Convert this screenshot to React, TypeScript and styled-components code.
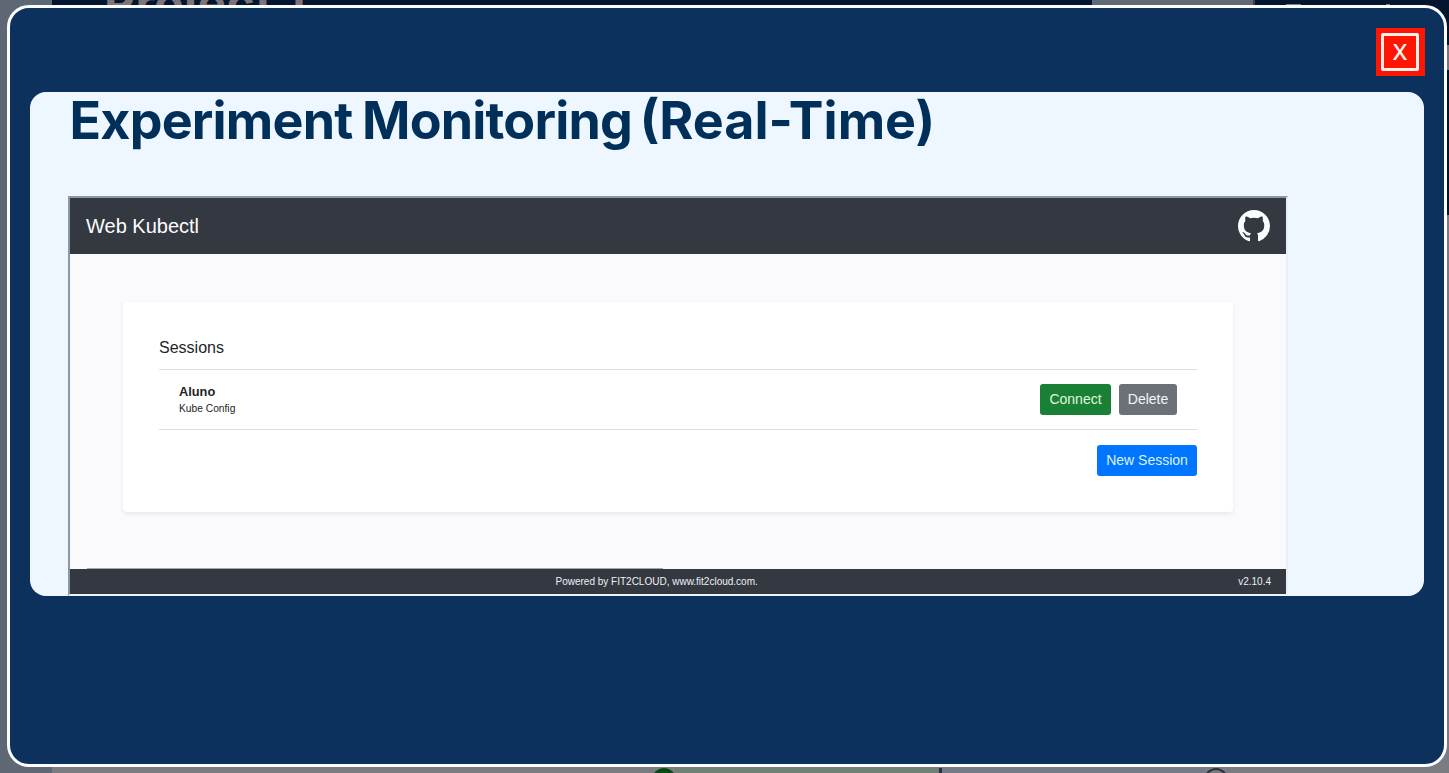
import React from "react";
import styled, { createGlobalStyle } from "styled-components";

const GlobalStyle = createGlobalStyle`
  * { box-sizing: border-box; }
  body { margin: 0; overflow: hidden; }
`;

const Page = styled.div`
  position: relative;
  width: 1449px;
  height: 773px;
  overflow: hidden;
  display: flex;
  background: #7b7c81;
  font-family: Inter, "Liberation Sans", sans-serif;
`;

const SideBar = styled.div`
  width: 52px;
  background: #5d6874;
`;

const Main = styled.div`
  flex: 1;
  display: flex;
  flex-direction: column;
  justify-content: space-between;
`;

const TopBar = styled.header`
  height: 215px;
  display: flex;
  background: #04152f;
`;

const ProjectName = styled.div`
  width: 1040px;
  padding-left: 52px;
  margin-top: -21px;
  font-size: 48px;
  line-height: 48px;
  font-weight: 700;
  letter-spacing: 0.4px;
  color: #7c7478;
`;

const TopField = styled.div`
  width: 163px;
  height: 40px;
  background: #606873;
  border-right: 2px solid #3d4148;
`;

const TopMark = styled.div<{ $gap: number; $width: number }>`
  width: ${(p) => p.$width}px;
  height: 2px;
  margin: 4px 0 0 ${(p) => p.$gap}px;
  background: #7d838b;
`;

const TopEdge = styled.div`
  width: 4px;
  height: 25px;
  margin: 45px 0 0 auto;
  background: #77777b;
`;

const Timeline = styled.div`
  height: 5px;
  display: flex;
  align-items: flex-start;
  overflow: hidden;
`;

const Dot = styled.span<{ $filled?: boolean }>`
  flex: none;
  width: 24px;
  height: 24px;
  border-radius: 50%;
  border: 2px solid ${(p) => (p.$filled ? "#064c12" : "#2a3043")};
  background: ${(p) => (p.$filled ? "#064c12" : "transparent")};
`;

const Track = styled.span<{ $width: number; $color: string }>`
  width: ${(p) => p.$width}px;
  height: 8px;
  background: ${(p) => p.$color};
`;

const Modal = styled.section`
  position: absolute;
  top: 5px;
  left: 7px;
  width: 1440px;
  height: 762px;
  padding: 20px;
  border: 3px solid #fafcff;
  border-radius: 22px;
  background: #0c315c;
  display: flex;
  flex-direction: column;
`;

const CloseButton = styled.button`
  align-self: flex-end;
  width: 49px;
  height: 48px;
  margin: 0 -1px 16px 0;
  padding: 5px 6px 5px 5px;
  border: 0;
  background: #ff1602;
  display: flex;
`;

const CloseFrame = styled.span`
  flex: 1;
  display: flex;
  align-items: center;
  justify-content: center;
  border: 3px solid #fff0ec;
  border-radius: 2px;
  font: 500 22px/30px Inter, sans-serif;
  color: #fff5f0;
`;

const Panel = styled.div`
  height: 504px;
  padding: 0 38px;
  border-radius: 16px;
  background: #eef7ff;
  overflow: hidden;
`;

const Title = styled.h1`
  margin: 0;
  height: 104px;
  padding: 0 0 0 1.5px;
  font-size: 52px;
  line-height: 58px;
  font-weight: 650;
  letter-spacing: -0.8px;
  word-spacing: -2px;
  white-space: nowrap;
  color: #00305a;
`;

const TitleNote = styled.span`
  margin-left: -2px;
  letter-spacing: 0;
`;

const Frame = styled.div`
  width: 1220px;
  height: 400px;
  display: flex;
  flex-direction: column;
  border: 2px solid;
  border-color: #8b97a4 #ebeef6 #edf1fa #8b97a4;
  background: #fafafd;
  font-family: "Liberation Sans", Arial, sans-serif;
  color: #212529;
`;

const NavBar = styled.nav`
  height: 56px;
  padding: 0 16px;
  display: flex;
  align-items: center;
  justify-content: space-between;
  background: #343840;
  color: #fbfcff;
  font-size: 20px;
`;

const Content = styled.main`
  flex: 1;
  padding: 49px 53px 0;
`;

const Card = styled.div`
  height: 210px;
  margin-top: -1px;
  padding: 36px;
  border-radius: 4px;
  background: #fff;
  box-shadow: 0 2px 4px rgba(0, 0, 0, 0.075);
`;

const CardTitle = styled.div`
  height: 31px;
  font-size: 16px;
  line-height: 20px;
`;

const SessionRow = styled.div`
  height: 61px;
  padding: 0 20px;
  display: flex;
  align-items: center;
  gap: 8px;
  border-top: 1px solid #dcdfe3;
  border-bottom: 1px solid #dcdfe3;
`;

const SessionInfo = styled.div`
  flex: 1;
`;

const SessionName = styled.div`
  font-size: 12.8px;
  line-height: 18px;
  font-weight: 700;
`;

const SessionKind = styled.div`
  font-size: 10.24px;
  line-height: 15px;
`;

const Actions = styled.div`
  display: flex;
  justify-content: flex-end;
  margin-top: 15px;
`;

const Button = styled.button<{ $width: number; $color: string; $text?: string }>`
  width: ${(p) => p.$width}px;
  height: 31px;
  padding: 0;
  border: 0;
  border-radius: 3px;
  background: ${(p) => p.$color};
  color: ${(p) => p.$text ?? "#f4f6fa"};
  font: 14px/21px "Liberation Sans", Arial, sans-serif;
  white-space: nowrap;
`;

const Footer = styled.footer`
  height: 26px;
  padding: 0 15px 0 17px;
  background: linear-gradient(#fafafd 1px, #343840 1px);
  color: #edf0f5;
  font-size: 10px;
  line-height: 12px;
`;

const FooterLine = styled.div`
  width: 576px;
  height: 1px;
  background: #a5a7aa;
`;

const FooterText = styled.div`
  display: grid;
  grid-template-columns: 1fr auto;
  padding-top: 7px;
`;

const Powered = styled.span`
  padding-left: 468.5px;
`;

const GithubMark = () => (
  <svg width="32" height="32" viewBox="0 0 16 16" fill="#fafcff">
    <path d="M8 0C3.58 0 0 3.58 0 8c0 3.54 2.29 6.53 5.47 7.59.4.07.55-.17.55-.38 0-.19-.01-.82-.01-1.49-2.01.37-2.53-.49-2.69-.94-.09-.23-.48-.94-.82-1.13-.28-.15-.68-.52-.01-.53.63-.01 1.08.58 1.23.82.72 1.21 1.87.87 2.33.66.07-.52.28-.87.51-1.07-1.78-.2-3.64-.89-3.64-3.95 0-.87.31-1.59.82-2.15-.08-.2-.36-1.02.08-2.12 0 0 .67-.21 2.2.82.64-.18 1.32-.27 2-.27s1.36.09 2 .27c1.53-1.04 2.2-.82 2.2-.82.44 1.1.16 1.92.08 2.12.51.56.82 1.27.82 2.15 0 3.07-1.87 3.75-3.65 3.95.29.25.54.73.54 1.48 0 1.07-.01 1.93-.01 2.2 0 .21.15.46.55.38A8.01 8.01 0 0 0 16 8c0-4.42-3.58-8-8-8z" />
  </svg>
);

export default function App() {
  return (
    <Page>
      <GlobalStyle />
      <SideBar />
      <Main>
        <TopBar>
          <ProjectName>Project 1</ProjectName>
          <TopField />
          <TopMark $gap={31} $width={15} />
          <TopMark $gap={85} $width={4} />
          <TopEdge />
        </TopBar>
        <Timeline>
          <Track $width={600} $color="transparent" />
          <Dot $filled />
          <Track $width={263} $color="#6f8275" />
          <Track $width={3} $color="#2a3043" />
          <Track $width={262} $color="#757c87" />
          <Dot />
        </Timeline>
      </Main>
      <Modal>
        <CloseButton aria-label="Close">
          <CloseFrame>X</CloseFrame>
        </CloseButton>
        <Panel>
          <Title>
            Experiment Monitoring <TitleNote>(Real-Time)</TitleNote>
          </Title>
          <Frame>
            <NavBar>
              <span>Web Kubectl</span>
              <GithubMark />
            </NavBar>
            <Content>
              <Card>
                <CardTitle>Sessions</CardTitle>
                <SessionRow>
                  <SessionInfo>
                    <SessionName>Aluno</SessionName>
                    <SessionKind>Kube Config</SessionKind>
                  </SessionInfo>
                  <Button $width={71} $color="#198035" $text="#e2f8df">Connect</Button>
                  <Button $width={58} $color="#6c7178">Delete</Button>
                </SessionRow>
                <Actions>
                  <Button $width={100} $color="#0075ff" $text="#dcf2ff">New Session</Button>
                </Actions>
              </Card>
            </Content>
            <Footer>
              <FooterLine />
              <FooterText>
                <Powered>Powered by FIT2CLOUD, www.fit2cloud.com.</Powered>
                <span>v2.10.4</span>
              </FooterText>
            </Footer>
          </Frame>
        </Panel>
      </Modal>
    </Page>
  );
}
